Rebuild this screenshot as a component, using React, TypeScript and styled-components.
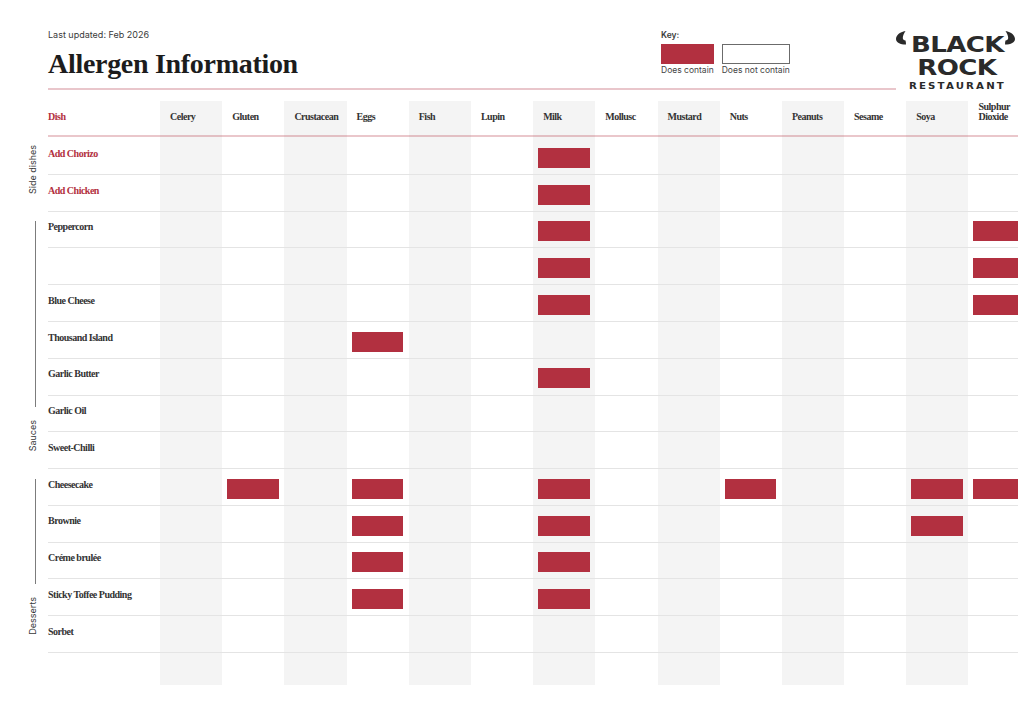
import React from 'react';
import styled, { createGlobalStyle } from 'styled-components';

const ROW_HEIGHT = 36.77;
const HEAD_HEIGHT = 37.7;

const allergens = [
    'Celery', 'Gluten', 'Crustacean', 'Eggs', 'Fish', 'Lupin', 'Milk',
    'Mollusc', 'Mustard', 'Nuts', 'Peanuts', 'Sesame', 'Soya', 'Sulphur Dioxide',
];

type Dish = { name: string; side?: boolean; contains: string[] };

const dishes: Dish[] = [
    { name: 'Add Chorizo', side: true, contains: ['Milk'] },
    { name: 'Add Chicken', side: true, contains: ['Milk'] },
    { name: 'Peppercorn', contains: ['Milk', 'Sulphur Dioxide'] },
    { name: '', contains: ['Milk', 'Sulphur Dioxide'] },
    { name: 'Blue Cheese', contains: ['Milk', 'Sulphur Dioxide'] },
    { name: 'Thousand Island', contains: ['Eggs'] },
    { name: 'Garlic Butter', contains: ['Milk'] },
    { name: 'Garlic Oil', contains: [] },
    { name: 'Sweet-Chilli', contains: [] },
    { name: 'Cheesecake', contains: ['Gluten', 'Eggs', 'Milk', 'Nuts', 'Soya', 'Sulphur Dioxide'] },
    { name: 'Brownie', contains: ['Eggs', 'Milk', 'Soya'] },
    { name: 'Créme brulée', contains: ['Eggs', 'Milk'] },
    { name: 'Sticky Toffee Pudding', contains: ['Eggs', 'Milk'] },
    { name: 'Sorbet', contains: [] },
];

const groups = [
    { label: 'Side dishes', rows: 2, line: false },
    { label: 'Sauces', rows: 7, line: true },
    { label: 'Desserts', rows: 5, line: true },
];

const GlobalStyle = createGlobalStyle`
    html, body {
        margin: 0;
        background: #fff;
    }
`;

const Page = styled.div`
    width: 1024px;
    height: 726px;
    overflow: hidden;
    box-sizing: border-box;
    padding: 29px 6px 0 0;
    color: #1f1f1f;
    font-family: 'Inter', sans-serif;
`;

const Header = styled.header`
    display: flex;
    height: 61px;
    margin-left: 48px;
    margin-bottom: 10.5px;
`;

const HeaderMain = styled.div`
    flex: 1;
    display: flex;
    justify-content: space-between;
    box-sizing: border-box;
    border-bottom: 2px solid #e9c6cb;
`;

const Updated = styled.div`
    font-size: 9px;
    line-height: 12px;
    color: #3a3a3a;
`;

const Title = styled.h1`
    margin: 8px 0 0;
    font-family: 'Liberation Serif', serif;
    font-size: 28px;
    line-height: 30px;
    font-weight: 700;
    letter-spacing: -0.3px;
    color: #1c1c1c;
`;

const Key = styled.div`
    width: 235px;
    flex-shrink: 0;
`;

const KeyTitle = styled.div`
    font-size: 8.5px;
    font-weight: 600;
    line-height: 12px;
    color: #3a3a3a;
`;

const KeyItems = styled.div`
    display: flex;
    gap: 8px;
    margin-top: 3px;
`;

const KeyItem = styled.div`
    display: flex;
    flex-direction: column;
    font-size: 8.5px;
    line-height: 13px;
    white-space: nowrap;
    color: #444;
`;

const Swatch = styled.div<{ $filled?: boolean }>`
    height: 20px;
    box-sizing: border-box;
    background: ${(p) => (p.$filled ? '#b23040' : '#fff')};
    border: ${(p) => (p.$filled ? 'none' : '1px solid #6b6b6b')};
`;

const Logo = styled.div`
    width: 122px;
    flex-shrink: 0;
    position: relative;
    display: flex;
    flex-direction: column;
    align-items: center;
    margin-top: 5px;
    color: #2a2a2a;
    font-family: 'DejaVu Sans', sans-serif;
    font-weight: 700;
`;

const LogoWord = styled.div`
    font-size: 21px;
    line-height: 23px;
    letter-spacing: -0.5px;
    transform: scaleX(1.24);
`;

const LogoSub = styled.div`
    margin-top: 1px;
    font-size: 8.5px;
    line-height: 10px;
    letter-spacing: 1.8px;
    font-weight: 600;
    transform: scaleX(1.2);
`;

const Horn = styled.svg<{ $right?: boolean }>`
    position: absolute;
    top: -3px;
    width: 10px;
    height: 15px;
    ${(p) => (p.$right ? 'right: 3px; transform: scaleX(-1);' : 'left: 0;')}
`;

const Body = styled.div`
    display: flex;
`;

const Sidebar = styled.aside`
    width: 48px;
    flex-shrink: 0;
    box-sizing: border-box;
    padding: ${HEAD_HEIGHT}px 11px 0 0;
`;

const Group = styled.div<{ $rows: number }>`
    height: ${(p) => p.$rows * ROW_HEIGHT}px;
    box-sizing: border-box;
    display: flex;
    flex-direction: column;
    align-items: flex-end;
    justify-content: flex-end;
    gap: 13px;
    padding: 9.5px 0 18px;
`;

const GroupLine = styled.div`
    flex: 1;
    width: 1px;
    margin-right: 1px;
    background: #7c7c7c;
`;

const GroupLabel = styled.div`
    writing-mode: vertical-rl;
    transform: rotate(180deg);
    font-size: 9px;
    line-height: 9px;
    white-space: nowrap;
    color: #3a3a3a;
`;

const Table = styled.div`
    flex: 1;
    display: flex;
    flex-direction: column;
    font-family: 'Liberation Serif', serif;
    font-weight: 700;
`;

const Row = styled.div<{ $height: number; $rule?: boolean }>`
    display: flex;
    height: ${(p) => p.$height}px;
    flex-shrink: 0;
    box-sizing: border-box;
    border-bottom: ${(p) => (p.$rule ? '1px solid #e4e4e4' : 'none')};
`;

const HeadRow = styled(Row)`
    position: relative;

    &::after {
        content: '';
        position: absolute;
        left: 0;
        right: 0;
        bottom: 1px;
        height: 2px;
        background: rgba(178, 48, 64, 0.27);
    }
`;

const DishCell = styled.div<{ $red?: boolean; $head?: boolean }>`
    width: 112px;
    flex-shrink: 0;
    padding-top: ${(p) => (p.$head ? '10.6px' : '9.6px')};
    font-size: 10px;
    line-height: 12px;
    letter-spacing: -0.5px;
    white-space: nowrap;
    color: ${(p) => (p.$red ? '#b23040' : '#333')};
`;

const Cell = styled.div<{ $shaded: boolean; $last: boolean }>`
    flex: ${(p) => (p.$last ? '1' : '0 0 62.2px')};
    min-width: 0;
    box-sizing: border-box;
    padding: 9.7px ${(p) => (p.$last ? '0' : '5.7px')} 0 5px;
    background: ${(p) => (p.$shaded ? '#f4f4f4' : 'transparent')};
`;

const HeadCell = styled(Cell)`
    display: flex;
    align-items: ${(p) => (p.$last ? 'flex-start' : 'center')};
    padding: ${(p) => (p.$last ? '1px 0 0 10px' : '0 0 5px 10px')};
    font-size: 10px;
    line-height: 10px;
    letter-spacing: -0.5px;
    color: #333;
`;

const Mark = styled.div`
    height: 20px;
    background: #b23040;
`;

const hornPath = 'M9.5 0 C3.5 1 0 4.5 0 8 C0 11.5 4 13.5 10 13.5 C10 12 9.8 10.5 9.5 9.5 C8 9.5 6.8 8.6 6.8 7 C6.8 4.5 8 2.2 9.5 0 Z';

const App = () => {
    return (
        <Page>
            <GlobalStyle />
            <Header>
                <HeaderMain>
                    <div>
                        <Updated>Last updated: Feb 2026</Updated>
                        <Title>Allergen Information</Title>
                    </div>
                    <Key>
                        <KeyTitle>Key:</KeyTitle>
                        <KeyItems>
                            <KeyItem>
                                <Swatch $filled />
                                Does contain
                            </KeyItem>
                            <KeyItem>
                                <Swatch />
                                Does not contain
                            </KeyItem>
                        </KeyItems>
                    </Key>
                </HeaderMain>
                <Logo>
                    <Horn viewBox="0 0 10 15">
                        <path d={hornPath} fill="#2a2a2a" />
                    </Horn>
                    <Horn $right viewBox="0 0 10 15">
                        <path d={hornPath} fill="#2a2a2a" />
                    </Horn>
                    <LogoWord>BLACK</LogoWord>
                    <LogoWord>ROCK</LogoWord>
                    <LogoSub>RESTAURANT</LogoSub>
                </Logo>
            </Header>
            <Body>
                <Sidebar>
                    {groups.map((group) => (
                        <Group key={group.label} $rows={group.rows}>
                            {group.line && <GroupLine />}
                            <GroupLabel>{group.label}</GroupLabel>
                        </Group>
                    ))}
                </Sidebar>
                <Table>
                    <HeadRow $height={HEAD_HEIGHT}>
                        <DishCell $red $head>Dish</DishCell>
                        {allergens.map((name, i) => (
                            <HeadCell key={name} $shaded={i % 2 === 0} $last={i === allergens.length - 1}>
                                <span>{name}</span>
                            </HeadCell>
                        ))}
                    </HeadRow>
                    {dishes.map((dish, rowIndex) => (
                        <Row key={rowIndex} $height={ROW_HEIGHT} $rule>
                            <DishCell $red={dish.side}>{dish.name}</DishCell>
                            {allergens.map((name, i) => (
                                <Cell key={name} $shaded={i % 2 === 0} $last={i === allergens.length - 1}>
                                    {dish.contains.includes(name) && <Mark />}
                                </Cell>
                            ))}
                        </Row>
                    ))}
                    <Row $height={32}>
                        <DishCell />
                        {allergens.map((name, i) => (
                            <Cell key={name} $shaded={i % 2 === 0} $last={i === allergens.length - 1} />
                        ))}
                    </Row>
                </Table>
            </Body>
        </Page>
    );
};

export default App;
